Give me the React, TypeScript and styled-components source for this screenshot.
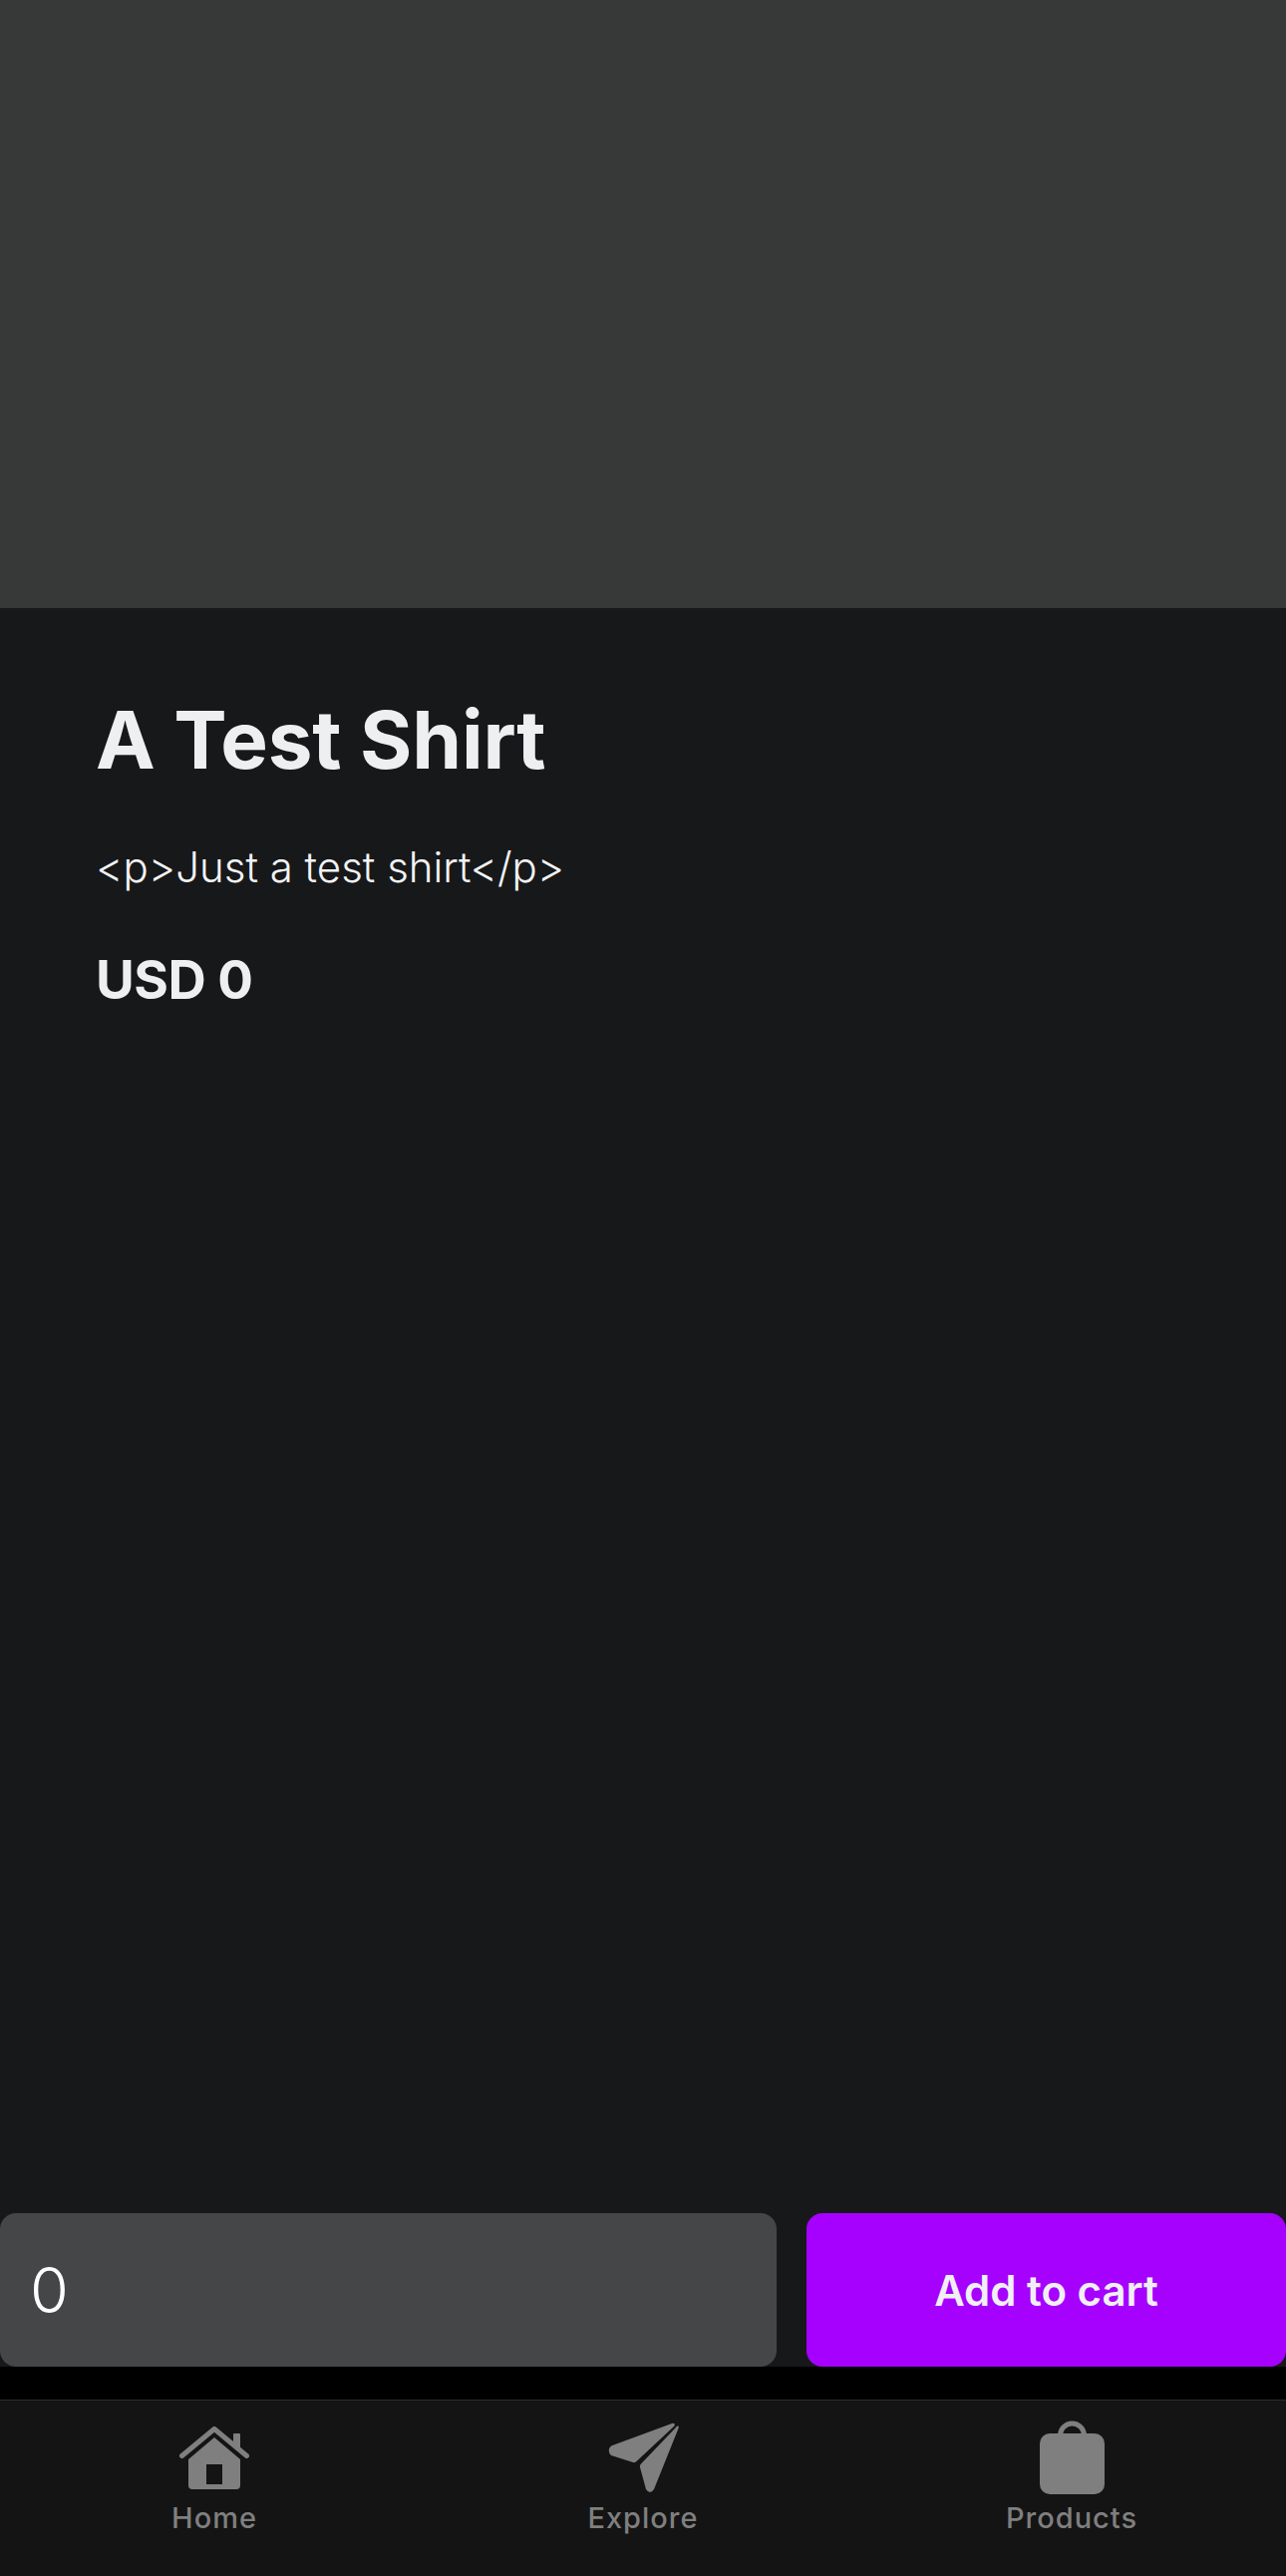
import { createGlobalStyle, styled } from "styled-components";

const GlobalStyle = createGlobalStyle`
  html, body {
    margin: 0;
    padding: 0;
    background: #000;
  }
  * {
    box-sizing: border-box;
  }
`;

const Page = styled.div`
  height: 2584px;
  display: flex;
  flex-direction: column;
  overflow: hidden;
  font-family: Inter, "Liberation Sans", sans-serif;
`;

const ProductImage = styled.div`
  height: 610px;
  flex-shrink: 0;
  background: #373938;
`;

const Details = styled.main`
  flex: 1;
  display: flex;
  flex-direction: column;
  background: #17181a;
`;

const Info = styled.section`
  flex: 1;
  padding: 84px 96px 0;
`;

const Title = styled.h1`
  margin: 0;
  font-size: 80px;
  line-height: 96px;
  font-weight: 700;
  letter-spacing: -0.2px;
  color: #eeeff1;
`;

const Description = styled.p`
  margin: 56px 0 0;
  font-size: 42px;
  line-height: 48px;
  font-weight: 300;
  color: #f2f3f5;
`;

const Price = styled.p`
  margin: 57px 0 0;
  font-size: 53px;
  line-height: 64px;
  font-weight: 700;
  letter-spacing: -0.5px;
  color: #eeeff1;
`;

const Actions = styled.div`
  display: flex;
  gap: 30px;
  height: 154px;
`;

const Quantity = styled.input`
  width: 779px;
  border: 0;
  border-radius: 16px;
  padding: 0 30px;
  background: #454648;
  color: #fff;
  font-family: inherit;
  font-size: 63px;
  font-weight: 300;
  outline: none;
`;

const AddButton = styled.button`
  flex: 1;
  border: 0;
  border-radius: 16px;
  background: #a600ff;
  color: #f0f0f4;
  font-family: inherit;
  font-size: 42px;
  font-weight: 600;
`;

const Spacer = styled.div`
  height: 33px;
  background: #000;
`;

const TabBar = styled.nav`
  height: 177px;
  flex-shrink: 0;
  display: grid;
  grid-template-columns: repeat(3, 1fr);
  border-top: 1px solid #2c2c2c;
  background: #141414;
`;

const Tab = styled.a`
  padding-top: 20px;
  display: flex;
  flex-direction: column;
  align-items: center;
  gap: 6px;
  color: #7f7f7f;
`;

const IconSlot = styled.span`
  height: 74px;
  display: flex;
  align-items: center;
  justify-content: center;
`;

const TabLabel = styled.span`
  font-size: 29px;
  line-height: 35px;
  font-weight: 500;
  letter-spacing: 1px;
`;

const HomeIcon = () => (
  <svg width="70" height="63" viewBox="0 0 70 63" fill="#7f7f7f">
    <path
      d="M2.5 29.5 35 2.5l32.5 27"
      fill="none"
      stroke="#7f7f7f"
      strokeWidth="5"
      strokeLinecap="round"
      strokeLinejoin="round"
    />
    <path d="M54 18V8a1 1 0 0 1 1-1h5a1 1 0 0 1 1 1v16Z" />
    <path
      fillRule="evenodd"
      d="M35 11 61 33v26a4 4 0 0 1-4 4H13a4 4 0 0 1-4-4V33ZM27 38v20h16V38Z"
    />
  </svg>
);

const ExploreIcon = () => (
  <svg width="71" height="71" viewBox="0 0 71 71" fill="#7f7f7f">
    <path d="M3 23.5 64 1Q67.5 0 66.5 3.5L28.5 39Q27 40.5 25 40L3 33Q-1.5 28 3 23.5Z" />
    <path d="M67.5 5.5Q69 3 70.5 3.5 71 4 70.5 6L46 67Q42 73 38 67L32 45Q31.5 43 33 41.5Z" />
  </svg>
);

const BagIcon = () => (
  <svg width="65" height="74" viewBox="0 0 65 74" fill="#7f7f7f">
    <path d="M20.5 15a12 12 0 0 1 24 0" fill="none" stroke="#7f7f7f" strokeWidth="5" />
    <rect y="13" width="65" height="61" rx="10" />
  </svg>
);

const tabs = [
  { label: "Home", icon: <HomeIcon /> },
  { label: "Explore", icon: <ExploreIcon /> },
  { label: "Products", icon: <BagIcon /> },
];

export default function App() {
  return (
    <Page>
      <GlobalStyle />
      <ProductImage />
      <Details>
        <Info>
          <Title>A Test Shirt</Title>
          <Description>{"<p>Just a test shirt</p>"}</Description>
          <Price>USD 0</Price>
        </Info>
        <Actions>
          <Quantity defaultValue="0" />
          <AddButton>Add to cart</AddButton>
        </Actions>
      </Details>
      <Spacer />
      <TabBar>
        {tabs.map((tab) => (
          <Tab key={tab.label}>
            <IconSlot>{tab.icon}</IconSlot>
            <TabLabel>{tab.label}</TabLabel>
          </Tab>
        ))}
      </TabBar>
    </Page>
  );
}
